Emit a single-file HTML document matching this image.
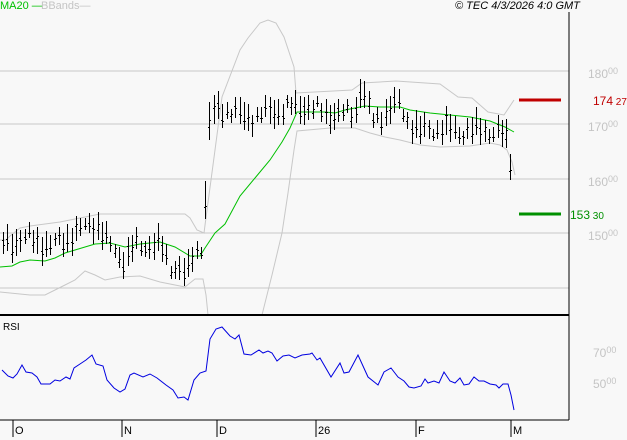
<!DOCTYPE html>
<html><head><meta charset="utf-8"><style>
html,body{margin:0;padding:0;background:#f8f8f8;}
body{width:627px;height:440px;overflow:hidden;position:relative;font-family:"Liberation Sans",sans-serif;}
.t{position:absolute;font-size:11px;white-space:nowrap;}
.ax{position:absolute;font-size:12px;color:#c4c4c4;white-space:nowrap;}
.ax sup{font-size:9px;vertical-align:4px;}
</style></head><body>
<svg id="s" width="627" height="440" style="position:absolute;left:0;top:0" shape-rendering="crispEdges">
<g stroke="#c8c8c8" stroke-width="1">
<line x1="0" y1="71" x2="569" y2="71"/><line x1="0" y1="124" x2="569" y2="124"/>
<line x1="0" y1="179" x2="569" y2="179"/><line x1="0" y1="233" x2="569" y2="233"/>
<line x1="0" y1="288" x2="569" y2="288"/>
</g>
<g fill="none" stroke="#c8c8c8" stroke-width="1" shape-rendering="auto">
<polyline points="0,240 6,240 10,236 20,228 30,226 60,222 90,216 100,214 185,214 190,218 197,230 204,233 207,210 215,150 222,97 240,50 248,38 260,23 268,20 276,23 284,37 294,67 296,93 352,90 362,83 396,81 440,84 458,97 472,98 488,112 504,115 514,100"/>
<polyline points="0,292 10,293 30,295 45,295 55,290 65,285 75,280 85,271 95,275 105,280 120,277 140,276 160,282 175,285 185,287 195,279 203,279 206,295 208,315"/>
<polyline points="262,315 272,275 282,233 288,193 294,150 297,131 330,128 355,128 370,133 385,137 400,140 420,145 440,147 470,146 490,143 500,145 507,150 512,162 515,175"/>
</g>
<polyline fill="none" stroke="#00c000" stroke-width="1" shape-rendering="auto" points="0,267 12,266 20,262 30,260 45,261 55,258 65,253 75,250 85,247 95,244 110,243 125,247 140,244 160,242 175,247 190,256 200,256 205,248 215,233 225,224 240,196 255,178 270,160 282,142 290,128 297,112 325,112 335,113 345,110 355,108 365,106 380,107 400,107 410,110 430,113 450,115 470,117 490,121 505,127 514,132"/>
<path id="bars" stroke="#000" stroke-width="1" fill="none"/>
<line x1="519" y1="100" x2="561" y2="100" stroke="#c00000" stroke-width="3"/>
<line x1="519" y1="214" x2="561" y2="214" stroke="#009000" stroke-width="3"/>
<line x1="569" y1="12" x2="569" y2="420" stroke="#000" stroke-width="1"/>
<line x1="0" y1="315" x2="569" y2="315" stroke="#000" stroke-width="2"/>
<line x1="0" y1="420" x2="569" y2="420" stroke="#000" stroke-width="1"/>
<polyline fill="none" stroke="#0000e0" stroke-width="1" shape-rendering="auto" points="2,370 8,376 13,378 17,374 22,365 26,372 32,373 37,377 41,384 50,384 55,380 60,381 66,377 70,379 74,368 80,364 86,360 92,355 96,364 103,366 107,380 114,388 120,392 125,389 130,375 134,373 143,377 150,374 157,378 166,385 173,390 178,398 184,397 188,400 194,380 200,373 206,371 210,339 216,329 222,327 230,336 235,339 239,335 244,354 251,355 259,350 263,353 268,351 272,353 277,361 283,356 289,355 295,358 302,355 310,354 312,353 317,360 320,358 331,377 340,363 344,373 349,372 358,355 368,377 378,385 384,372 391,368 398,377 404,381 409,387 414,388 421,386 425,379 428,383 434,381 439,383 444,372 450,381 455,383 460,378 464,385 469,384 474,377 479,381 484,381 490,384 496,385 499,388 503,384 508,384 511,395 514,410"/>
<g stroke="#000" stroke-width="1">
<line x1="13" y1="420" x2="13" y2="437"/><line x1="122" y1="420" x2="122" y2="437"/>
<line x1="217" y1="420" x2="217" y2="437"/><line x1="316" y1="420" x2="316" y2="437"/>
<line x1="416" y1="420" x2="416" y2="437"/><line x1="511" y1="420" x2="511" y2="437"/>
</g>
</svg>
<div class="t" style="left:0;top:0;color:#00c000">MA20 —</div>
<div class="t" style="left:41px;top:0;color:#c4c4c4">BBands—</div>
<div class="t" style="left:455px;top:0;color:#000;font-style:italic">© TEC 4/3/2026 4:0 GMT</div>
<div class="ax" style="left:588px;top:66px">180<sup>00</sup></div>
<div class="ax" style="left:588px;top:119px">170<sup>00</sup></div>
<div class="ax" style="left:588px;top:174px">160<sup>00</sup></div>
<div class="ax" style="left:588px;top:228px">150<sup>00</sup></div>
<div class="ax" style="left:593px;top:94px;color:#c00000">174<sup style="font-size:10px;vertical-align:0"> 27</sup></div>
<div class="ax" style="left:570px;top:208px;color:#009000">153<sup style="font-size:10px;vertical-align:0"> 30</sup></div>
<div class="ax" style="left:593px;top:345px">70<sup>00</sup></div>
<div class="ax" style="left:593px;top:376px">50<sup>00</sup></div>
<div class="t" style="left:3px;top:322px;color:#000;font-size:10px">RSI</div>
<div class="t" style="left:15px;top:425px;color:#000">O</div>
<div class="t" style="left:124px;top:425px;color:#000">N</div>
<div class="t" style="left:219px;top:425px;color:#000">D</div>
<div class="t" style="left:318px;top:425px;color:#000">26</div>
<div class="t" style="left:418px;top:425px;color:#000">F</div>
<div class="t" style="left:513px;top:425px;color:#000">M</div>
<script>
var K=[[0,245],[20,240],[30,238],[50,248],[60,240],[75,236],[90,222],[95,224],[105,240],[115,250],[125,262],[135,245],[160,246],[170,265],[180,270],[186,278],[193,253],[202,245],[206,190],[209,128],[214,112],[220,108],[230,112],[240,116],[255,118],[270,112],[290,108],[305,106],[320,112],[340,115],[355,112],[360,88],[366,100],[372,122],[385,113],[398,103],[405,118],[420,132],[440,128],[460,132],[480,130],[500,133],[506,140],[510,158],[514,192]];
function c(x){for(var i=1;i<K.length;i++){if(x<=K[i][0]){var a=K[i-1],b=K[i];return a[1]+(b[1]-a[1])*(x-a[0])/(b[0]-a[0]);}}return K[K.length-1][1];}
var d="";
for(var x=3;x<=514;x+=4.3){var m=c(x);var n=Math.sin(x*1.7)*5+Math.sin(x*0.63)*4;var h=6+Math.abs(Math.sin(x*2.3))*9;
if(x>=205&&x<=210)h=20;if(x>=512)h=16;
var xx=Math.round(x)+0.5;var t=Math.round(m+n-h),b=Math.round(m+n+h*0.9);
d+="M"+xx+" "+t+"V"+b;var o=Math.round(t+(b-t)*(0.3+0.4*Math.abs(Math.sin(x*3.1))));
var cl=Math.round(t+(b-t)*(0.3+0.4*Math.abs(Math.cos(x*1.3))));
d+="M"+(xx-1.5)+" "+(o+0.5)+"H"+xx+"M"+xx+" "+(cl+0.5)+"H"+(xx+1.5);}
document.getElementById("bars").setAttribute("d",d);
</script>
</body></html>
